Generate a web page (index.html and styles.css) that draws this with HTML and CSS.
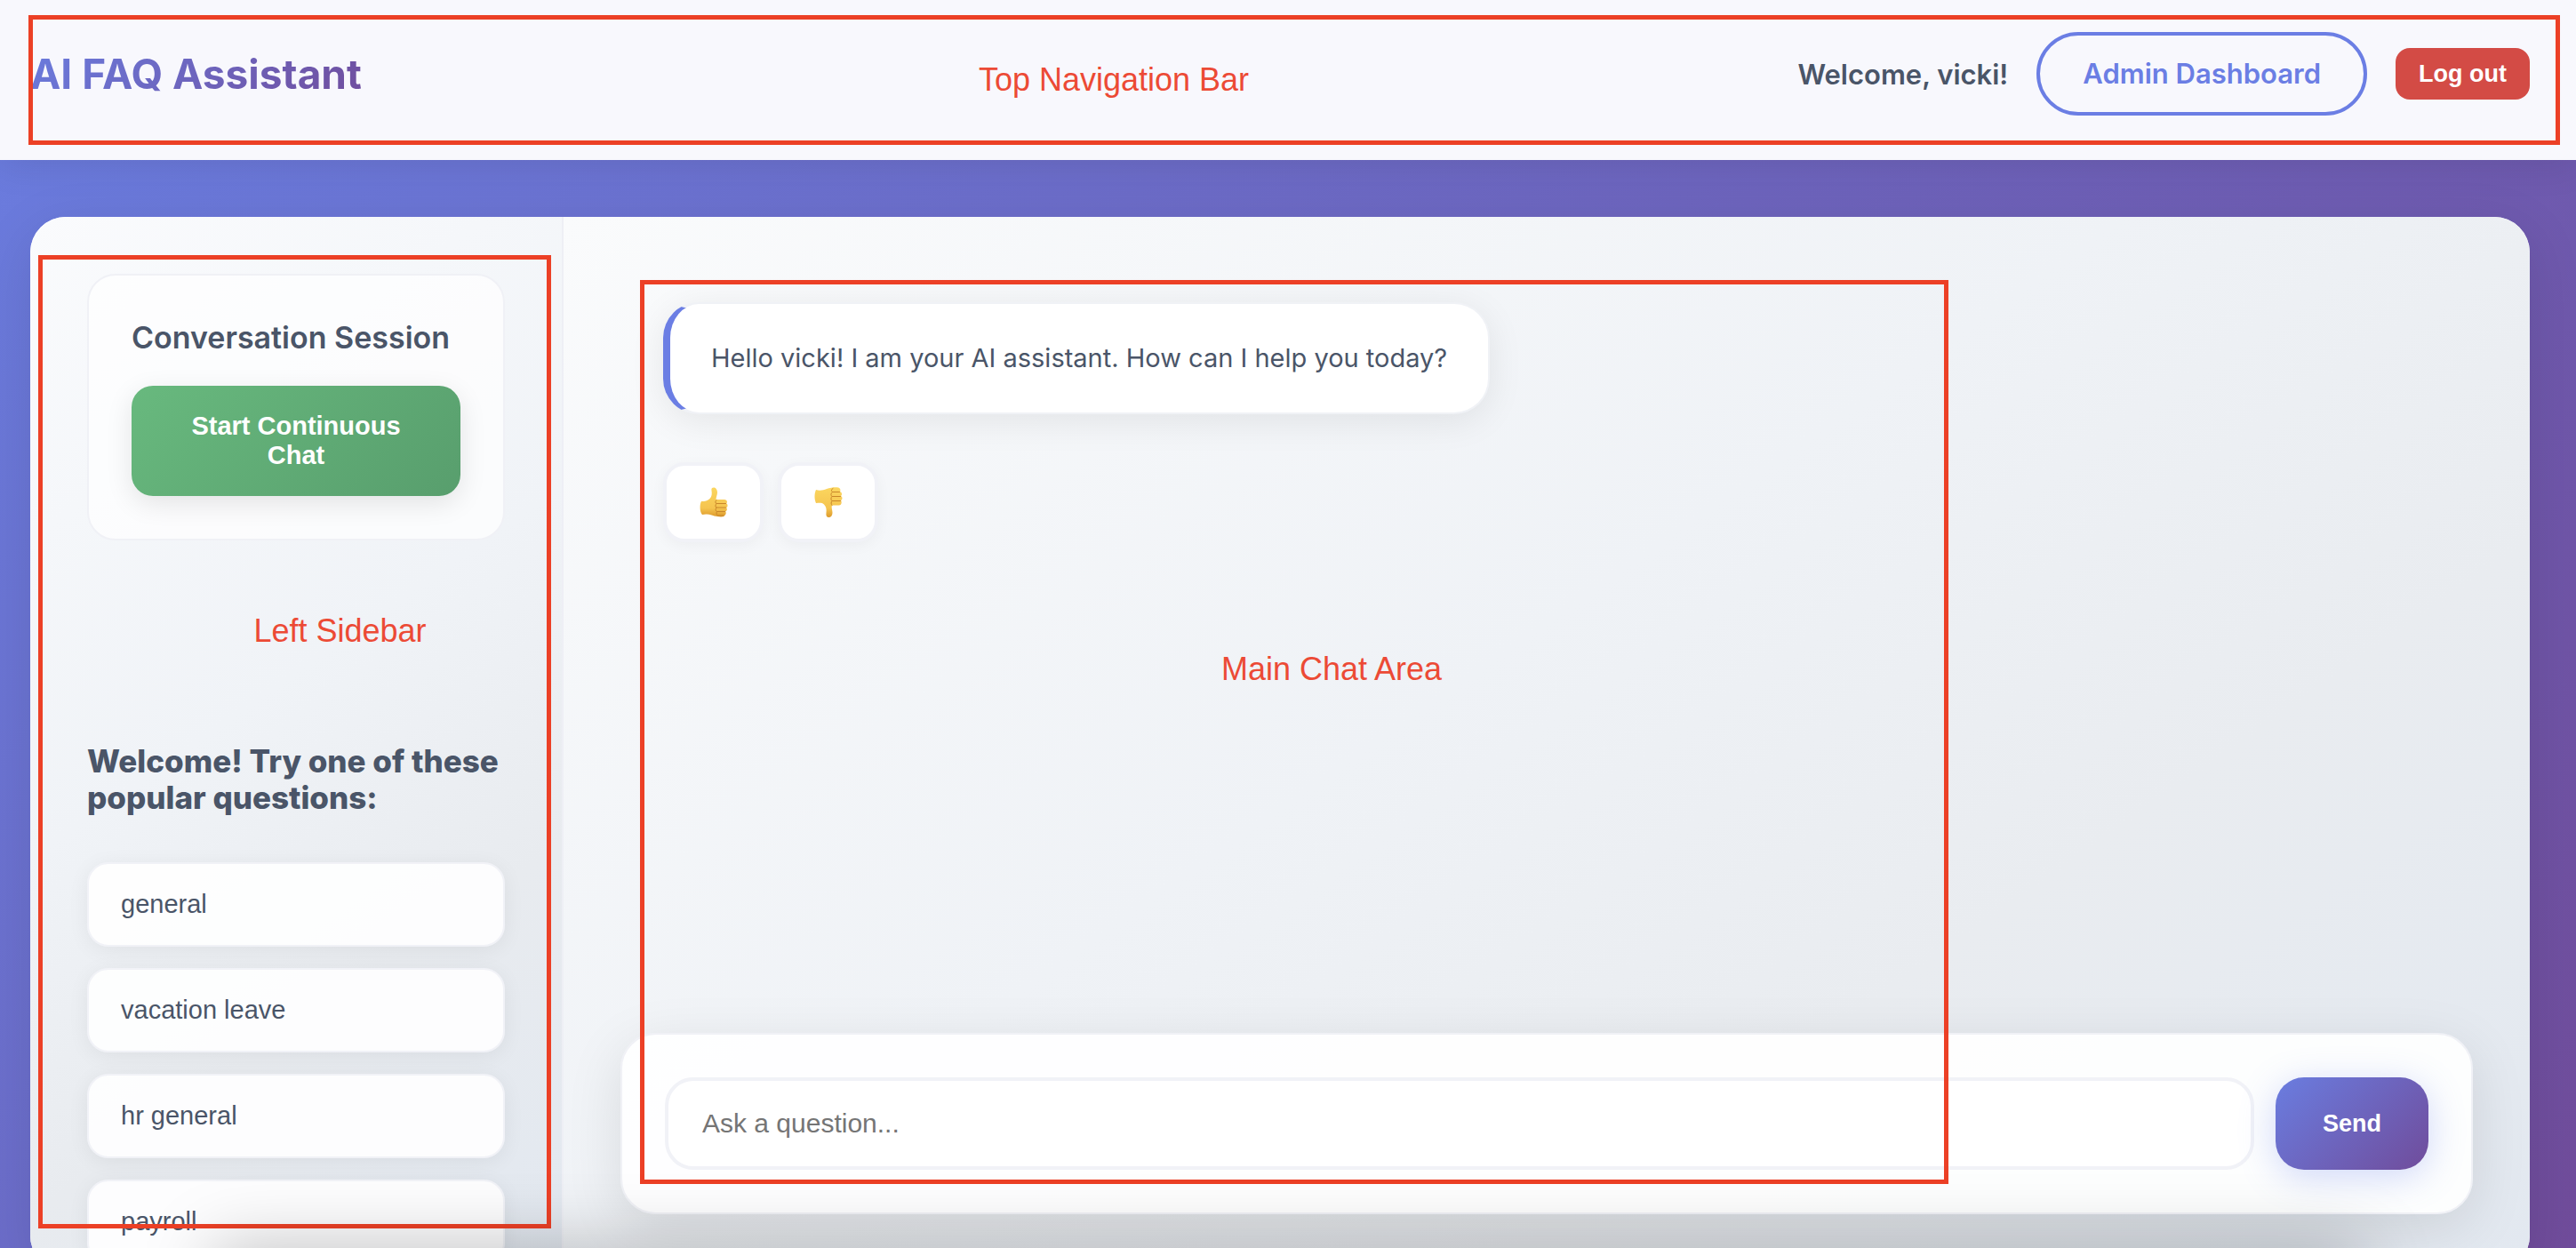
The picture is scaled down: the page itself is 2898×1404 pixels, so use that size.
FILE: index.html
```html
<!DOCTYPE html>
<html lang="en">
<head>
<meta charset="utf-8">
<meta name="viewport" content="width=device-width, initial-scale=1">
<title>AI FAQ Assistant</title>
<link rel="stylesheet" href="styles.css">
</head>
<body>
<div class="app">
  <header class="navbar">
    <h1 class="brand">AI FAQ Assistant</h1>
    <div class="user-menu">
      <span class="greeting">Welcome, vicki!</span>
      <a class="admin-link" href="#admin">Admin Dashboard</a>
      <button class="logout" type="button">Log out</button>
    </div>
    <div class="region region-nav"><span class="region-label">Top Navigation Bar</span></div>
  </header>

  <main class="panel">
    <aside class="sidebar">
      <section class="session">
        <h2 class="session-title">Conversation Session</h2>
        <button class="start-chat" type="button">Start Continuous Chat</button>
      </section>
      <h2 class="popular-title">Welcome! Try one of these popular questions:</h2>
      <div class="questions">
        <button class="question" type="button">general</button>
        <button class="question" type="button">vacation leave</button>
        <button class="question" type="button">hr general</button>
        <button class="question" type="button">payroll</button>
      </div>
      <div class="region region-sidebar"><span class="region-label">Left Sidebar</span></div>
    </aside>

    <section class="chat">
      <div class="messages">
        <p class="message">Hello vicki! I am your AI assistant. How can I help you today?</p>
        <div class="feedback">
          <button class="vote" type="button" aria-label="Helpful">
            <svg class="thumb" viewBox="0 0 32 34" aria-hidden="true">
              <defs>
                <linearGradient id="skin" x1="0" y1="0" x2="0" y2="1">
                  <stop offset="0" stop-color="#fbd65f"/>
                  <stop offset="0.7" stop-color="#f5c44f"/>
                  <stop offset="1" stop-color="#dd9a2c"/>
                </linearGradient>
              </defs>
              <path fill="url(#skin)" d="M2 16C6 16 9 15.500 11.500 13C14 10.500 14 7 13.500 4C13 1.500 14 .5 16 .5C18.500 .5 20 3 20 6C20 9 18.500 11 18.500 14L28 14C31.500 14 31.500 18 30 18.500C32 19 32 22.500 30 23C31.500 24 31 27 29 27.500C30.500 28.500 29.500 31.500 28 32C27 34 23 33.500 20 33C15 32.500 11 30 7 30.500L3 31C0 28 0 19 2 16Z"/>
              <path fill="none" stroke="#c9862a" stroke-width="1" stroke-linecap="round" d="M19 14.500C17.500 16 17.500 18 19 18.500H29.500M19 18.500C17.500 20 17.500 22.500 19 23H29.500M19 23C17.500 24.500 18 27 19.500 27.500H28.500M19.500 27.500C18.500 29 19 31 20.500 32H27"/>
            </svg>
          </button>
          <button class="vote" type="button" aria-label="Not helpful">
            <svg class="thumb" viewBox="0 0 32 34" aria-hidden="true">
              <path fill="url(#skin)" d="M2 3C6 4.500 10 3.500 14 2C18 .5 24 0 27 .5C29.500 1 30 4 29 5C31.500 6 31.500 9 30 10C32 11 32 14 30 15C31.500 17 30.500 20.500 28 20.500H20C19 23 20.500 26 20.500 29C20.500 32 18.500 34 16.500 34C14 34 13 32 13.500 29C14 25 13.500 22 11 19.500C8 17 6 18 2 18C0 14 0 7 2 3Z"/>
              <path fill="none" stroke="#c9862a" stroke-width="1" stroke-linecap="round" d="M21 1.500C19 2.500 19 4.500 20.500 5.500H28.500M20.500 5.500C18.500 7 18.500 9 20 10.500H29.500M20 10.500C18.500 12 18.500 14 20 15.500H29.500M20 15.500C18.500 17 19 19.500 20 20.500"/>
            </svg>
          </button>
        </div>
      </div>
      <form class="composer">
        <input class="composer-input" type="text" placeholder="Ask a question..." aria-label="Ask a question">
        <button class="send" type="button">Send</button>
      </form>
      <div class="region region-chat"><span class="region-label">Main Chat Area</span></div>
    </section>
  </main>
  <div class="dock-shadow"></div>
</div>
</body>
</html>
```
FILE: styles.css
```css
* {
  box-sizing: border-box;
}

body {
  margin: 0;
  font-family: Inter, "Liberation Sans", sans-serif;
  color: #4a5568;
}

h1, h2, p {
  margin: 0;
}

button, input {
  font-family: "Liberation Sans", Arial, sans-serif;
}

.app {
  position: relative;
  display: flex;
  flex-direction: column;
  height: 100vh;
  overflow: hidden;
  background: linear-gradient(135deg, #6a7de0 0%, #704c9b 100%);
}

/* Top bar */
.navbar {
  position: relative;
  display: flex;
  flex: none;
  justify-content: space-between;
  align-items: flex-start;
  padding: 36px 52px 50px 34px;
  background: #f8f8fd;
  box-shadow: 0 4px 40px rgba(0, 0, 0, 0.1);
}

.brand {
  font-size: 46px;
  font-weight: 700;
  line-height: 94px;
  background: linear-gradient(135deg, #6a7de0 0%, #704c9b 100%);
  background-clip: text;
  -webkit-background-clip: text;
  color: transparent;
}

.user-menu {
  display: flex;
  align-items: center;
  gap: 32px;
}

.greeting {
  font-size: 31px;
  font-weight: 600;
}

.admin-link {
  padding: 0 48px;
  border: 4px solid #6b7ee4;
  border-radius: 48px;
  font-size: 31px;
  font-weight: 600;
  line-height: 86px;
  color: #6b7ee4;
  text-decoration: none;
}

.logout {
  padding: 0 26px;
  border: 0;
  border-radius: 16px;
  background: #d34b45;
  font-size: 27px;
  font-weight: 700;
  line-height: 58px;
  color: #fff;
}

/* Main panel */
.panel {
  display: grid;
  flex: none;
  grid-template-columns: 600px 1fr;
  height: calc(100vh - 218px);
  margin: 64px 52px 0 34px;
  border-radius: 40px;
  background: #fff;
  box-shadow: 0 16px 64px rgba(0, 0, 0, 0.1);
}

.sidebar {
  position: relative;
  min-height: 0;
  padding: 64px;
  border-right: 2px solid #eeeff5;
  border-radius: 40px 0 0 40px;
  background: linear-gradient(145deg, #fafbfd 0%, #f0f3f7 45%, #e8ebef 70%, #e2e8f0 100%);
}

.session {
  padding: 48px;
  border: 2px solid #f0f1f6;
  border-radius: 32px;
  background: rgba(255, 255, 255, 0.7);
}

.session-title {
  margin-bottom: 32px;
  font-size: 34px;
  font-weight: 600;
  line-height: 44px;
  white-space: nowrap;
}

.start-chat {
  width: 100%;
  padding: 29px 48px;
  border: 0;
  border-radius: 24px;
  background: linear-gradient(135deg, #68b97e 0%, #589e6d 100%);
  box-shadow: 0 8px 30px rgba(0, 0, 0, 0.1);
  font-size: 29px;
  font-weight: 700;
  line-height: 33px;
  color: #fff;
}

.popular-title {
  margin: 228px 0 52px;
  font-size: 35px;
  font-weight: 800;
  line-height: 41px;
}

.questions {
  display: flex;
  flex-direction: column;
  gap: 24px;
}

.question {
  padding: 29px 36px;
  border: 2px solid #f1f2f7;
  border-radius: 24px;
  background: rgba(255, 255, 255, 0.9);
  box-shadow: 0 4px 24px rgba(0, 0, 0, 0.06);
  font-size: 29px;
  line-height: 33px;
  text-align: left;
  color: #4a5568;
}

/* Chat column */
.chat {
  position: relative;
  display: flex;
  flex-direction: column;
  justify-content: space-between;
  min-width: 0;
  padding: 64px;
  border-radius: 0 40px 40px 0;
  background: linear-gradient(145deg, #fafbfc 0%, #eff2f6 45%, #e9ecf0 70%, #e2e8f0 100%);
}

.messages {
  padding: 32px 48px;
}

.message {
  width: fit-content;
  padding: 36px 46px;
  border: 2px solid #f0f2f6;
  border-left: 8px solid #6b7ee4;
  border-radius: 40px;
  background: #fff;
  box-shadow: 0 8px 40px rgba(0, 0, 0, 0.08);
  font-size: 29px;
  line-height: 50px;
}

.feedback {
  display: flex;
  gap: 16px;
  margin-top: 54px;
}

.vote {
  display: grid;
  place-items: center;
  width: 113px;
  height: 90px;
  padding: 0;
  border: 4px solid #f1f2f7;
  border-radius: 24px;
  background: #fff;
  box-shadow: 0 4px 16px rgba(0, 0, 0, 0.04);
}

.thumb {
  width: 32px;
  height: 34px;
}

.composer {
  display: flex;
  gap: 24px;
  padding: 48px;
  border: 2px solid #f0f1f6;
  border-radius: 40px;
  background: rgba(255, 255, 255, 0.92);
  box-shadow: 0 16px 64px rgba(0, 0, 0, 0.1);
}

.composer-input {
  flex: 1;
  min-width: 0;
  height: 104px;
  padding: 0 38px;
  border: 4px solid #f1f2f7;
  border-radius: 32px;
  background: #fff;
  font-size: 30px;
}

.composer-input::placeholder {
  color: #757575;
}

.send {
  width: 172px;
  border: 0;
  border-radius: 32px;
  background: linear-gradient(135deg, #6a7de0 0%, #704c9b 100%);
  box-shadow: 0 8px 40px rgba(102, 126, 234, 0.3);
  font-size: 27px;
  font-weight: 700;
  color: #fff;
}

/* Outlined, labelled page regions */
.region {
  position: absolute;
  display: grid;
  place-items: center;
  border: 5px solid #ec4026;
  pointer-events: none;
}

.region-label {
  font-family: "Liberation Sans", Arial, sans-serif;
  font-size: 36px;
  line-height: 42px;
  color: #ec4a35;
}

.region-nav {
  inset: 17px 18px 17px 32px;
  padding-right: 406px;
}

.region-sidebar {
  inset: 43px 12px 48px 9px;
  padding: 0 0 250px 102px;
}

.region-chat {
  inset: 71px 654px 98px 86px;
  padding: 0 0 142px 84px;
}

/* Shade cast upward from just below the window */
.dock-shadow {
  position: absolute;
  top: 100%;
  left: 240px;
  right: 240px;
  height: 80px;
  box-shadow: 0 0 80px rgba(0, 0, 0, 0.25);
  pointer-events: none;
}
```
